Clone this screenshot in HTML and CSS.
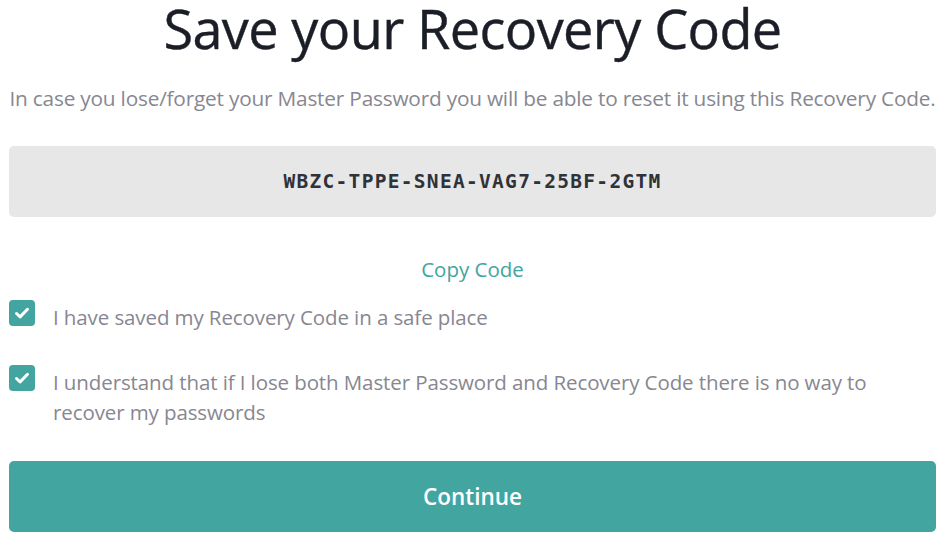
FILE: index.html
```html
<!DOCTYPE html>
<html>
<head>
<meta charset="utf-8">
<link rel="stylesheet" href="styles.css">
</head>
<body>
<main class="page">
  <h1 class="title">Save your Recovery Code</h1>
  <p class="subtitle">In case you lose/forget your Master Password you will be able to reset it using this Recovery Code.</p>
  <div class="code-box">WBZC-TPPE-SNEA-VAG7-25BF-2GTM</div>
  <div class="copy-row"><a class="copy-link">Copy Code</a></div>
  <label class="check">
    <span class="box"><svg viewBox="0 0 26 26" width="26" height="26"><path d="M7.5 13.5l3.6 3.4 7.4-7.6" fill="none" stroke="#fff" stroke-width="3" stroke-linecap="round" stroke-linejoin="round"/></svg></span>
    <span class="check-text">I have saved my Recovery Code in a safe place</span>
  </label>
  <label class="check check-second">
    <span class="box"><svg viewBox="0 0 26 26" width="26" height="26"><path d="M7.5 13.5l3.6 3.4 7.4-7.6" fill="none" stroke="#fff" stroke-width="3" stroke-linecap="round" stroke-linejoin="round"/></svg></span>
    <span class="check-text">I understand that if I lose both Master Password and Recovery Code there is no way to recover my passwords</span>
  </label>
  <button class="continue">Continue</button>
</main>
</body>
</html>
```
FILE: styles.css
```css
* { box-sizing: border-box; }
html, body { margin: 0; padding: 0; background: #fff; }
body { font-family: "Open Sans", "Noto Sans", sans-serif; }
.page {
  width: 944px;
  padding: 0 8px 0 9px;
  display: flex;
  flex-direction: column;
}
.title {
  margin: 0;
  text-align: center;
  font-size: 54px;
  font-weight: 400;
  line-height: 56px;
  color: #1b1e26;
  letter-spacing: -0.6px;
  -webkit-text-stroke: 0.4px #1b1e26;
}
.subtitle {
  margin: 29px 0 0;
  font-size: 20.8px;
  line-height: 26px;
  color: #878791;
  text-align: center;
  white-space: nowrap;
  letter-spacing: -0.2px;
}
.code-box {
  margin-top: 35px;
  height: 71px;
  background: #e7e7e7;
  border-radius: 5px;
  display: flex;
  align-items: center;
  justify-content: center;
  font-family: "DejaVu Sans Mono", monospace;
  font-weight: 700;
  font-size: 19.5px;
  letter-spacing: 1.3px;
  color: #2f3238;
}
.copy-row {
  margin-top: 38px;
  display: flex;
  justify-content: center;
}
.copy-link {
  font-size: 20.5px;
  line-height: 28px;
  color: #42a5a0;
  font-weight: 500;
}
.check {
  display: flex;
  align-items: flex-start;
  gap: 18px;
  margin-top: 17px;
}
.check-second { margin-top: 33px; }
.box {
  flex: none;
  width: 26px;
  height: 26px;
  border-radius: 4px;
  background: #42a5a0;
  display: block;
}
.box svg { display: block; }
.check-text {
  font-size: 20.5px;
  line-height: 30px;
  color: #878791;
  margin-top: 2px;
  padding-right: 50px;
  letter-spacing: -0.1px;
}
.continue {
  margin-top: 34px;
  height: 71px;
  width: 100%;
  border: 0;
  border-radius: 5px;
  background: #42a5a0;
  color: #fff;
  font-family: "Open Sans", "Noto Sans", sans-serif;
  font-size: 22.5px;
  font-weight: 600;
}
```
